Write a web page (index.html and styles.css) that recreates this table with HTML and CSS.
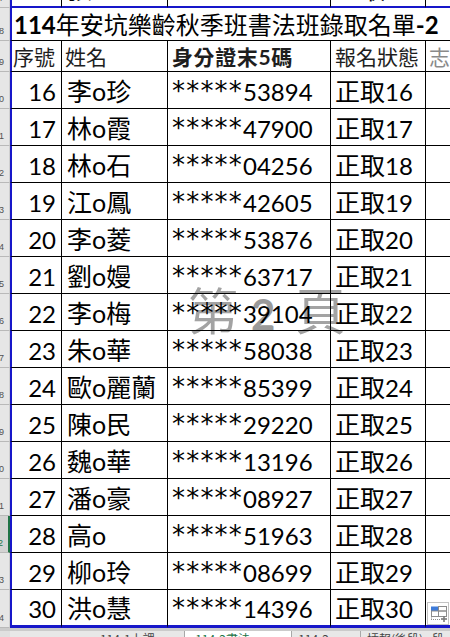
FILE: index.html
```html
<!DOCTYPE html>
<html lang="zh-Hant">
<head>
<meta charset="utf-8">
<title>114年安坑樂齡秋季班書法班錄取名單-2</title>
<link rel="stylesheet" href="styles.css">
</head>
<body>
<div class="screen">
  <div class="watermark"><span class="wm-cjk">第</span><span class="wm-num">2</span><span class="wm-cjk wm-last">頁</span></div>
  <div class="sheet">
    <div class="row partial">
      <div class="rh">17</div>
      <div class="c a"><span class="n">15</span></div>
      <div class="c b">張o玉</div>
      <div class="c cc"><span class="ast">*****</span><span class="n">31562</span></div>
      <div class="c d">正取<span class="n">15</span></div>
      <div class="c e"></div>
    </div>
    <div class="row title">
      <div class="rh">18</div>
      <div class="c t"><b>114</b>年安坑樂齡秋季班書法班錄取名單<b>-2</b></div>
    </div>
    <div class="row head">
      <div class="rh">19</div>
      <div class="c a left">序號</div>
      <div class="c b">姓名</div>
      <div class="c cc bold">身分證末5碼</div>
      <div class="c d">報名狀態</div>
      <div class="c e muted">志</div>
    </div>
    <div class="row data">
      <div class="rh">20</div>
      <div class="c a"><span class="n">16</span></div>
      <div class="c b">李o珍</div>
      <div class="c cc"><span class="ast">*****</span><span class="n">53894</span></div>
      <div class="c d">正取<span class="n">16</span></div>
      <div class="c e"></div>
    </div>
    <div class="row data">
      <div class="rh">21</div>
      <div class="c a"><span class="n">17</span></div>
      <div class="c b">林o霞</div>
      <div class="c cc"><span class="ast">*****</span><span class="n">47900</span></div>
      <div class="c d">正取<span class="n">17</span></div>
      <div class="c e"></div>
    </div>
    <div class="row data">
      <div class="rh">22</div>
      <div class="c a"><span class="n">18</span></div>
      <div class="c b">林o石</div>
      <div class="c cc"><span class="ast">*****</span><span class="n">04256</span></div>
      <div class="c d">正取<span class="n">18</span></div>
      <div class="c e"></div>
    </div>
    <div class="row data">
      <div class="rh">23</div>
      <div class="c a"><span class="n">19</span></div>
      <div class="c b">江o鳳</div>
      <div class="c cc"><span class="ast">*****</span><span class="n">42605</span></div>
      <div class="c d">正取<span class="n">19</span></div>
      <div class="c e"></div>
    </div>
    <div class="row data">
      <div class="rh">24</div>
      <div class="c a"><span class="n">20</span></div>
      <div class="c b">李o菱</div>
      <div class="c cc"><span class="ast">*****</span><span class="n">53876</span></div>
      <div class="c d">正取<span class="n">20</span></div>
      <div class="c e"></div>
    </div>
    <div class="row data">
      <div class="rh">25</div>
      <div class="c a"><span class="n">21</span></div>
      <div class="c b">劉o嫚</div>
      <div class="c cc"><span class="ast">*****</span><span class="n">63717</span></div>
      <div class="c d">正取<span class="n">21</span></div>
      <div class="c e"></div>
    </div>
    <div class="row data">
      <div class="rh">26</div>
      <div class="c a"><span class="n">22</span></div>
      <div class="c b">李o梅</div>
      <div class="c cc"><span class="ast">*****</span><span class="n">39104</span></div>
      <div class="c d">正取<span class="n">22</span></div>
      <div class="c e"></div>
    </div>
    <div class="row data">
      <div class="rh">27</div>
      <div class="c a"><span class="n">23</span></div>
      <div class="c b">朱o華</div>
      <div class="c cc"><span class="ast">*****</span><span class="n">58038</span></div>
      <div class="c d">正取<span class="n">23</span></div>
      <div class="c e"></div>
    </div>
    <div class="row data">
      <div class="rh">28</div>
      <div class="c a"><span class="n">24</span></div>
      <div class="c b">歐o麗蘭</div>
      <div class="c cc"><span class="ast">*****</span><span class="n">85399</span></div>
      <div class="c d">正取<span class="n">24</span></div>
      <div class="c e"></div>
    </div>
    <div class="row data">
      <div class="rh">29</div>
      <div class="c a"><span class="n">25</span></div>
      <div class="c b">陳o民</div>
      <div class="c cc"><span class="ast">*****</span><span class="n">29220</span></div>
      <div class="c d">正取<span class="n">25</span></div>
      <div class="c e"></div>
    </div>
    <div class="row data">
      <div class="rh">30</div>
      <div class="c a"><span class="n">26</span></div>
      <div class="c b">魏o華</div>
      <div class="c cc"><span class="ast">*****</span><span class="n">13196</span></div>
      <div class="c d">正取<span class="n">26</span></div>
      <div class="c e"></div>
    </div>
    <div class="row data">
      <div class="rh">31</div>
      <div class="c a"><span class="n">27</span></div>
      <div class="c b">潘o豪</div>
      <div class="c cc"><span class="ast">*****</span><span class="n">08927</span></div>
      <div class="c d">正取<span class="n">27</span></div>
      <div class="c e"></div>
    </div>
    <div class="row data">
      <div class="rh sel">32</div>
      <div class="c a"><span class="n">28</span></div>
      <div class="c b">高o</div>
      <div class="c cc"><span class="ast">*****</span><span class="n">51963</span></div>
      <div class="c d">正取<span class="n">28</span></div>
      <div class="c e"></div>
    </div>
    <div class="row data">
      <div class="rh">33</div>
      <div class="c a"><span class="n">29</span></div>
      <div class="c b">柳o玲</div>
      <div class="c cc"><span class="ast">*****</span><span class="n">08699</span></div>
      <div class="c d">正取<span class="n">29</span></div>
      <div class="c e"></div>
    </div>
    <div class="row data last">
      <div class="rh">34</div>
      <div class="c a"><span class="n">30</span></div>
      <div class="c b">洪o慧</div>
      <div class="c cc"><span class="ast">*****</span><span class="n">14396</span></div>
      <div class="c d">正取<span class="n">30</span></div>
      <div class="c e"></div>
    </div>
  </div>
  <div class="tabs">
    <div class="tab-rh"></div>
    <div class="tab-gap"></div>
    <div class="tab t1">114-1上課</div>
    <div class="tab active">114-2書法</div>
    <div class="tab t3">114-2</div>
    <div class="tab t4">插報(後段)</div>
    <div class="tab t5">段</div>
  </div>
  <div class="paste-opt">
    <svg width="20" height="21" viewBox="0 0 20 21">
      <rect x="3" y="3.5" width="7.5" height="4.5" fill="#3d7bd9"/>
      <rect x="10.5" y="3.5" width="8" height="4.5" fill="#fff" stroke="#8c8c8c" stroke-width="1"/>
      <rect x="3.5" y="8" width="7" height="5.5" fill="none" stroke="#8c8c8c" stroke-width="1"/>
      <rect x="10.5" y="8" width="8" height="5.5" fill="none" stroke="#8c8c8c" stroke-width="1"/>
      <line x1="3.5" y1="13.5" x2="3.5" y2="17" stroke="#8c8c8c" stroke-width="1" stroke-dasharray="1 1"/>
      <line x1="3" y1="16.5" x2="12" y2="16.5" stroke="#8c8c8c" stroke-width="1" stroke-dasharray="1 1"/>
      <line x1="13" y1="16" x2="19" y2="16" stroke="#7a7a7a" stroke-width="1.6"/>
      <line x1="16" y1="13" x2="16" y2="19" stroke="#7a7a7a" stroke-width="1.6"/>
    </svg>
  </div>
</div>
</body>
</html>
```

FILE: styles.css
```css
* {
  box-sizing: border-box;
}

html,
body {
  margin: 0;
  padding: 0;
}

body {
  width: 450px;
  height: 637px;
  overflow: hidden;
  background: #ffffff;
  color: #000000;
  font-family: Lato, "Noto Sans CJK TC", sans-serif;
}

.screen {
  position: relative;
  width: 450px;
  height: 637px;
  overflow: hidden;
  display: flex;
  flex-direction: column;
}

/* watermark "第 2 頁" (page-break preview) */
.watermark {
  position: absolute;
  left: 188px;
  top: 283px;
  display: flex;
  align-items: baseline;
  color: #a3a3a3;
  font-family: "Noto Sans CJK TC", sans-serif;
  font-size: 50px;
  line-height: 50px;
  white-space: nowrap;
}

.wm-num {
  font-family: Lato, sans-serif;
  font-weight: 700;
  font-size: 42px;
  margin-left: 13px;
  color: #9a9a9a;
}

.wm-last {
  margin-left: 20px;
}

.sheet {
  position: relative;
  display: flex;
  flex-direction: column;
}

.row {
  display: grid;
  grid-template-columns: 10px 52px 106px 163px 95px 1fr;
}

/* row header */
.rh {
  background: #e6e6e6;
  border-right: 1px solid #cfcfcf;
  border-bottom: 1px solid #b9b9b9;
  display: flex;
  justify-content: flex-end;
  align-items: flex-end;
  padding: 0 5px 4px 0;
  overflow: hidden;
  white-space: nowrap;
  font-family: "Liberation Sans", sans-serif;
  font-size: 9px;
  line-height: 9px;
  color: #505050;
}

.rh.sel {
  background: #d3d3d3;
  border-right: 2px solid #217346;
  color: #217346;
}

/* cells */
.c {
  display: flex;
  align-items: flex-end;
  border-right: 1px solid #000;
  border-bottom: 1px solid #000;
  overflow: hidden;
  white-space: nowrap;
}

.a {
  border-left: 2px solid #1717c9;
  justify-content: flex-end;
  padding-right: 5px;
}

.b {
  padding-left: 5px;
}

.cc {
  padding-left: 4px;
}

.d {
  padding-left: 4px;
}

.e {
  border-right: none;
  padding-left: 3px;
}

.n {
  font-size: 24px;
}

.ast {
  font-family: "DejaVu Sans", sans-serif;
  font-size: 26px;
  letter-spacing: 1.2px;
}

/* partial row at the top (tail of row 17) */
.partial {
  height: 8px;
}

.partial .c {
  border-bottom: 2px solid #1717c9;
  font-size: 25px;
  line-height: 25px;
  padding-bottom: 4px;
}

/* title row */
.title {
  height: 33px;
}

.t {
  grid-column: 2 / -1;
  border-left: 2px solid #1717c9;
  border-right: none;
  font-size: 24px;
  line-height: 24px;
  padding: 0 0 3px 2px;
}

.t b {
  font-weight: 700;
}

/* header row */
.head {
  height: 31px;
}

.head .c {
  font-size: 21px;
  line-height: 21px;
  padding-bottom: 4px;
  color: #1e1e1e;
}

.head .a.left {
  justify-content: flex-start;
  padding-left: 1px;
  padding-right: 0;
}

.head .b {
  padding-left: 3px;
}

.head .cc {
  padding-left: 4px;
}

.bold {
  font-weight: 700;
  letter-spacing: 0.6px;
}

.muted {
  color: #8a8a8a !important;
}

/* data rows */
.data {
  height: 37px;
}

.data .c {
  font-size: 25px;
  line-height: 25px;
  padding-bottom: 4px;
}

.data.last {
  height: 38px;
}

.data.last .c {
  border-bottom: 3px solid #1717c9;
}

/* sheet tabs (cut off at the bottom) */
.tabs {
  flex: 1;
  display: flex;
  background: #e8e8e8;
  border-top: 3px solid #cbcbcb;
  font-family: "Noto Sans CJK TC", sans-serif;
  font-size: 12px;
  line-height: 16px;
  color: #444;
  overflow: hidden;
  white-space: nowrap;
}

.tab-rh {
  width: 10px;
  background: #e0e0e0;
}

.tab-gap {
  width: 86px;
}

.tab {
  padding: 0 6px;
  border-right: 1px solid #a8a8a8;
}

.t1 {
  width: 93px;
}

.active {
  width: 109px;
  background: #ffffff;
  color: #217346;
  padding-left: 10px;
}

.t3 {
  width: 70px;
}

.t4 {
  width: 65px;
  border-right: none;
}

.t5 {
  border-right: none;
}

/* paste-options smart tag */
.paste-opt {
  position: absolute;
  left: 427px;
  top: 602px;
  width: 22px;
  height: 23px;
  background: #ffffff;
  border: 1px solid #c4c4c4;
  display: flex;
}
```
